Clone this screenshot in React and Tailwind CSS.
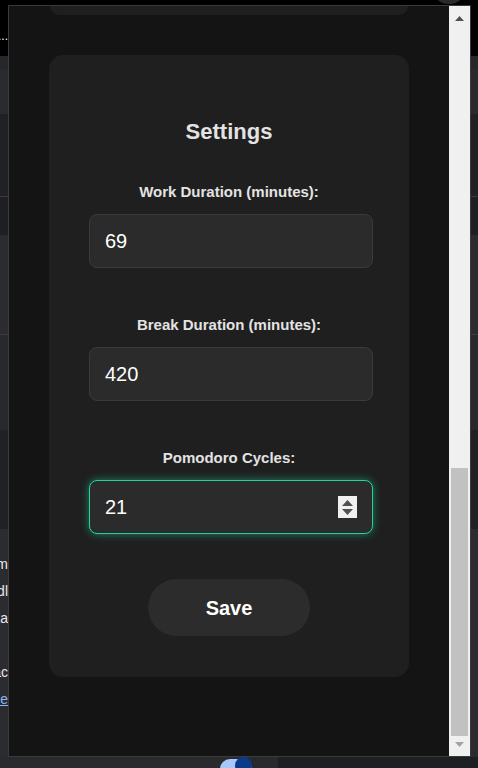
import { useState } from 'react';

const font = { fontFamily: '"Liberation Sans", Arial, sans-serif' };

function Field({ label, value, focused, spinner }) {
  return (
    <div className="flex flex-col">
      <label className="text-center text-[15px] leading-[20px] font-bold text-[#e3e3e3]">{label}</label>
      <div
        className={`mt-[12px] ml-[40px] w-[284px] h-[54px] rounded-[8px] bg-[#2b2b2b] flex items-center pl-[15px] pr-[15px] border ${
          focused ? 'border-[#22d3a0] shadow-[0_0_8px_rgba(34,211,160,0.55)]' : 'border-[#3b3b3b]'
        }`}
      >
        <input
          readOnly
          value={value}
          className="flex-1 min-w-0 bg-transparent outline-none text-[20px] text-white"
          style={font}
        />
        {spinner && (
          <div className="w-[19px] h-[22px] bg-[#f0f0f0] flex flex-col items-center justify-center gap-[3px]">
            <svg width="11" height="6" viewBox="0 0 11 6"><path d="M5.5 0L11 6H0z" fill="#505050" /></svg>
            <svg width="11" height="6" viewBox="0 0 11 6"><path d="M0 0h11L5.5 6z" fill="#505050" /></svg>
          </div>
        )}
      </div>
    </div>
  );
}

export default function App() {
  const [work] = useState('69');
  const [brk] = useState('420');
  const [cycles] = useState('21');

  return (
    <div className="relative w-[478px] h-[768px] overflow-hidden bg-black" style={font}>
      {/* page behind the popup */}
      <div className="flex flex-col h-full">
        <div className="h-[56px] bg-black relative">
          <div className="absolute left-0 top-[27px] w-[8px] overflow-hidden flex justify-end text-[12px] text-white whitespace-nowrap">...</div>
          <div className="absolute right-[13px] top-[-26px] w-[32px] h-[30px] rounded-full bg-[#2a2a2a]" />
        </div>
        <div className="h-[13px] bg-[#26272b]" />
        <div className="h-[45px] bg-[#2a2b2e]" />
        <div className="h-[83px] bg-[#202124] border-b border-[#3c3c3c]" />
        <div className="h-[38px] bg-[#1e1f22]" />
        <div className="h-[100px] bg-[#2b2c2f] border-b border-[#3c3c3c]" />
        <div className="h-[95px] bg-[#28292c]" />
        <div className="h-[99px] bg-[#202124]" />
        <div className="flex-1 bg-[#2b2c2f] pt-[22px]">
          {['m', 'dl', 'a', '', 'ac', 'e'].map((t, i) => (
            <div key={i} className="w-[8px] h-[27px] overflow-hidden flex justify-end items-center whitespace-nowrap text-[14px] text-[#e8eaed]">
              {t === 'e' ? <span className="text-[#8ab4f8] underline">Re</span> : t === '' ? '' : <span>x{t}</span>}
            </div>
          ))}
        </div>
        <div className="h-[11px] flex">
          <div className="w-[278px] bg-[#292a2d] flex justify-end pr-[26px]">
            <div className="relative w-[32px] h-[20px] rounded-full bg-[#a8c7fa] mt-[2px]">
              <div className="absolute right-0 top-[-2px] w-[17px] h-[17px] rounded-full bg-[#0b3a8a]" />
            </div>
          </div>
          <div className="flex-1 bg-[#1e1f22]" />
        </div>
      </div>

      {/* popup */}
      <div className="absolute left-[8px] top-[5px] w-[463px] h-[752px] border border-[#3a3a3a] bg-[#141414] flex">
        <div className="w-[440px] h-full overflow-hidden flex flex-col">
          <div className="mx-auto w-[358px] h-[9px] rounded-b-[14px] bg-[#1f1f1f] shrink-0" />
          <div className="mx-auto mt-[40px] w-[360px] rounded-[14px] bg-[#1f1f1f] pt-[64px] pb-[41px] shrink-0 flex flex-col">
            <h2 className="text-center text-[22px] leading-[26px] font-bold text-[#e3e3e3]">Settings</h2>
            <div className="mt-[37px] flex flex-col gap-[47px]">
              <Field label="Work Duration (minutes):" value={work} />
              <Field label="Break Duration (minutes):" value={brk} />
              <Field label="Pomodoro Cycles:" value={cycles} focused spinner />
            </div>
            <button className="mt-[45px] mx-auto w-[162px] h-[57px] rounded-full bg-[#2c2c2c] text-white text-[20px] font-bold">
              Save
            </button>
          </div>
        </div>
        <div className="w-[21px] h-full bg-[#f0f0f0] flex flex-col items-center">
          <div className="h-[17px] flex items-center justify-center mt-[4px]">
            <svg width="9" height="5" viewBox="0 0 9 5"><path d="M4.5 0L9 5H0z" fill="#505050" /></svg>
          </div>
          <div className="flex-1" />
          <div className="w-[17px] h-[268px] bg-[#c1c1c1]" />
          <div className="h-[17px] flex items-center justify-center mb-[3px]">
            <svg width="9" height="5" viewBox="0 0 9 5"><path d="M0 0h9L4.5 5z" fill="#a3a3a3" /></svg>
          </div>
        </div>
      </div>
    </div>
  );
}
